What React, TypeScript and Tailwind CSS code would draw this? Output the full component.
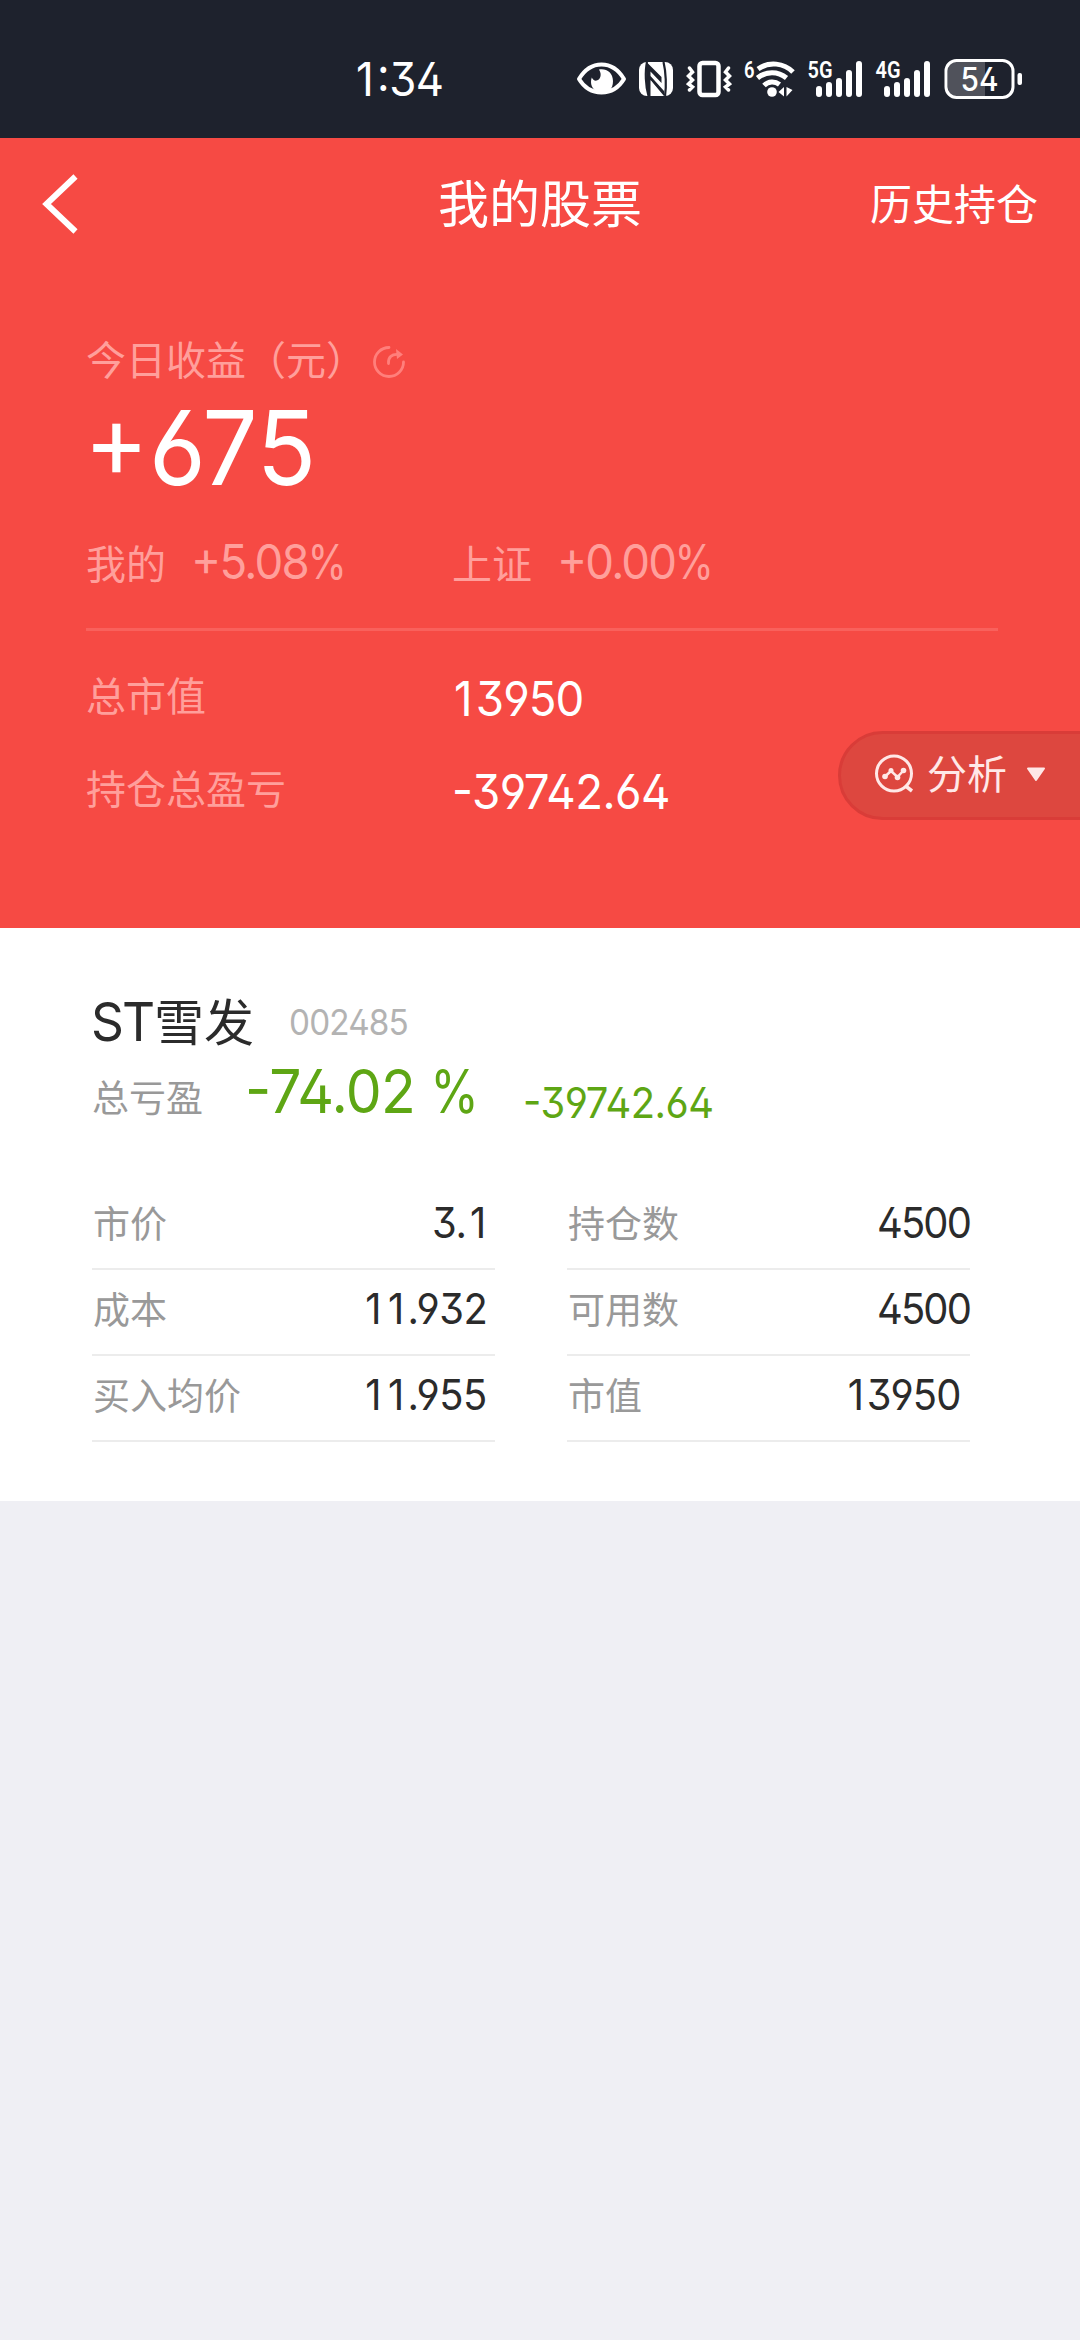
import clsx from "clsx";
import { twMerge } from "tailwind-merge";

const CN = "font-['Noto_Sans_CJK_SC',sans-serif]";
const NUM =
  "block whitespace-pre font-['Inter','Noto_Sans_CJK_SC',sans-serif] [font-feature-settings:'ss01','case'] tracking-[-0.012em] scale-x-[0.95]";

type NumProps = { children: string; className?: string; right?: boolean };

// Narrow figures, anchored to the side they are aligned on.
// "1" gets extra room so that columns of digits stay even.
function Num({ children, className, right }: NumProps) {
  return (
    <span className={twMerge(NUM, right ? "origin-right" : "origin-left", className)}>
      {children.split(/([1%])/).map((part, i) => {
        if (part === "1") {
          return (
            <i key={i} className="px-[0.09em] not-italic">
              1
            </i>
          );
        }
        if (part === "%") {
          return (
            <i key={i} className="inline-block origin-left scale-x-[0.87] not-italic">
              %
            </i>
          );
        }
        return part;
      })}
    </span>
  );
}

function Signal({ label }: { label: string }) {
  return (
    <svg width="56" height="40" viewBox="0 0 56 40" fill="none" className="overflow-visible">
      <text
        x="0.5"
        y="19"
        fill="#fff"
        fontFamily="Roboto, sans-serif"
        fontSize="23"
        fontWeight="600"
        textLength="25"
        lengthAdjust="spacingAndGlyphs"
      >
        {label}
      </text>
      <path
        d="M12 30v5M22 26v9M32 22v13M42 14v21M52 5v30"
        stroke="#fff"
        strokeWidth="6"
        strokeLinecap="round"
      />
    </svg>
  );
}

function StatusBar() {
  return (
    <div className="flex h-[138px] items-center bg-[#1e222d] pt-5 pl-[352px]">
      <div className="w-[224px] text-[46px] leading-[46px] text-white">
        <Num>1:34</Num>
      </div>

      <svg width="51" height="40" viewBox="0 0 51 40" fill="none">
        <path
          d="M3 20C9 10 17 5.500 25.500 5.500S42 10 48 20C42 30 34 33.500 25.500 33.500S9 30 3 20Z"
          stroke="#fff"
          strokeWidth="4"
          strokeLinejoin="round"
        />
        <path
          d="M23 10.500c7-1.500 14 3 14 11.500s-5 12-11 12-11-5-11-11c0-1.500.2-3 .8-4.500 1 2.500 3 3.500 5 3 3.500-.8 5.500-6 2.200-11Z"
          fill="#fff"
        />
      </svg>

      <svg width="34" height="40" viewBox="0 0 34 40" className="ml-[12px]">
        <rect y="3" width="34" height="34" rx="8" fill="#fff" />
        <path
          d="M8 3C6 12 6.500 27 9.500 37M24.500 3C27 13 27.500 28 26 37"
          stroke="#1e222d"
          strokeWidth="2.200"
          fill="none"
        />
        <path
          d="M8 3.500L22.500 18V24L11.500 12.500V17L25 32V37L11.500 21V37H9.500C7 27 7 13 8 3.500Z"
          fill="#1e222d"
          fillRule="evenodd"
        />
        <path d="M12 22L24 37H12Z" fill="#fff" />
      </svg>

      <svg width="46" height="40" viewBox="0 0 46 40" fill="none" className="ml-[13px]">
        <rect x="13.500" y="4" width="19" height="32" rx="3" stroke="#fff" strokeWidth="4.500" />
        <path
          d="M3.500 9l3 4-4 4 4 4-4 4 4 3-3 3M42.500 9l-3 4 4 4-4 4 4 4-4 3 3 3"
          stroke="#fff"
          strokeWidth="3.500"
          strokeLinecap="round"
        />
      </svg>

      <svg
        width="54"
        height="40"
        viewBox="0 0 54 40"
        fill="none"
        className="ml-[12px] overflow-visible"
      >
        <text
          x="0"
          y="18.500"
          fill="#fff"
          fontFamily="Roboto, sans-serif"
          fontSize="24"
          fontWeight="600"
          textLength="10.5"
          lengthAdjust="spacingAndGlyphs"
        >
          6
        </text>
        <path
          d="M14 10C25 2 40 4 49 13M13.500 19C22 12 34 12 42.500 19M20 26.500C24.500 22 31 22 35.500 25.500"
          stroke="#fff"
          strokeWidth="5"
        />
        <circle cx="28" cy="33" r="4.800" fill="#fff" />
        <path d="M40 28v9.500L34.500 33ZM42.500 28v9.500L48.500 31Z" fill="#fff" />
      </svg>

      <div className="ml-[9px] flex gap-3">
        <Signal label="5G" />
        <Signal label="4G" />
      </div>

      <svg width="80" height="42" viewBox="0 0 80 42" fill="none" className="ml-[13px]">
        <path d="M12 4H41V38H12Q4 38 4 30V12Q4 4 12 4Z" fill="#50525b" />
        <rect x="2" y="2.500" width="67" height="37" rx="10.500" stroke="#fff" strokeWidth="3" />
        <rect x="73.500" y="15" width="4.500" height="12" rx="2" fill="#fff" />
        <text
          x="16.500"
          y="32.500"
          fill="#fff"
          fontFamily="Inter, sans-serif"
          fontSize="32"
          fontWeight="500"
          textLength="38"
          lengthAdjust="spacingAndGlyphs"
          className="[font-feature-settings:'ss01']"
        >
          54
        </text>
      </svg>
    </div>
  );
}

function NavBar() {
  return (
    <div className="grid h-[132px] grid-cols-3 items-center text-white">
      <svg width="40" height="64" viewBox="0 0 40 64" fill="none" className="ml-[40px]">
        <path d="M35.500 4.500L6.500 32L35.500 59.500" stroke="#fff" strokeWidth="6" />
      </svg>
      <div className="pb-[6px] text-center text-[51px] leading-none">我的股票</div>
      <div className="pr-[42px] pb-[5px] text-right text-[42px] leading-none">历史持仓</div>
    </div>
  );
}

function AnalysisButton() {
  return (
    <button className="absolute top-[593px] right-[-4px] flex h-[89px] w-[246px] items-center rounded-l-full border-[3px] border-[#d93c38] bg-[#dd473f] pl-[33px] text-[#ffe8e7]">
      <svg
        width="40"
        height="40"
        viewBox="0 0 40 40"
        fill="none"
        stroke="currentColor"
        className="-mt-[3px]"
      >
        <circle cx="20" cy="19.500" r="17.500" strokeWidth="3" />
        <path d="M31 31.500L38 37" strokeWidth="3.500" />
        <path d="M11 22.500L17 17L23.500 23L29.500 16.500" strokeWidth="2.500" />
        <g fill="currentColor" stroke="none">
          <circle cx="11" cy="22.500" r="2.800" />
          <circle cx="17" cy="16.500" r="2.500" />
          <circle cx="23.500" cy="23.500" r="2.800" />
          <circle cx="29.500" cy="16.500" r="2.800" />
        </g>
      </svg>
      <span className="ml-[13px] pb-[7px] text-[40px] leading-none">分析</span>
      <svg width="20" height="15" viewBox="0 0 20 15" className="-mt-[3px] ml-[19px]">
        <path
          d="M2 1.500H18L10 13Z"
          fill="currentColor"
          stroke="currentColor"
          strokeWidth="2"
          strokeLinejoin="round"
        />
      </svg>
    </button>
  );
}

function Summary() {
  return (
    <div className="px-[86px] pt-[66px] text-[40px] leading-[48px] text-[#ff9f9b]">
      <div className="flex h-[48px] items-center">
        <span className="-mt-1 w-[286px] shrink-0 whitespace-nowrap">今日收益（元）</span>
        <svg width="34" height="34" viewBox="0 0 34 34" fill="none" className="mt-1 text-[#ff7f7b]">
          <path
            d="M17 2.500A14.500 14.500 0 1 0 31.500 17M16.500 18.500C16 12 20 9 26 9.500"
            stroke="currentColor"
            strokeWidth="2.800"
            strokeLinecap="round"
          />
          <path d="M24 4L31 9.500L25 14Z" fill="currentColor" />
        </svg>
      </div>

      <div className="mt-[15px] -ml-[2px] h-[98px] text-[103px] leading-[98px] text-white">
        <Num className="tracking-[0.002em]">+675</Num>
      </div>

      <div className="mt-[41px] flex h-[48px] items-center">
        <span className="w-[105px]">我的</span>
        <Num className="w-[261px] text-[48px] tracking-[-0.038em]">+5.08%</Num>
        <span className="w-[105px]">上证</span>
        <Num className="text-[48px] tracking-[-0.04em]">+0.00%</Num>
      </div>

      <div className="mt-[42px] h-[3px] w-[912px] bg-[#f9615c]" />

      <div className="mt-[43px] flex h-[48px] items-center">
        <span className="-mt-[8px] w-[364px]">总市值</span>
        <Num className="mt-[2px] text-[48px] tracking-[-0.02em] text-white">13950</Num>
      </div>
      <div className="mt-[45px] flex h-[48px] items-center">
        <span className="-mt-[8px] w-[366px]">持仓总盈亏</span>
        <Num className="mt-[2px] text-[48px] text-white">-39742.64</Num>
      </div>
    </div>
  );
}

type RowProps = { label: string; value: string; className?: string };

function Row({ label, value, className }: RowProps) {
  return (
    <div className="flex h-[86px] items-center justify-between border-b-2 border-[#ececec] pl-px">
      <span className="pb-[7px] text-[37px] text-[#999]">{label}</span>
      <Num right className={clsx("pb-[7px] text-[42px] text-[#2b2b2b]", className)}>
        {value}
      </Num>
    </div>
  );
}

const LEFT_ROWS = [
  { label: "市价", value: "3.1", className: "mr-[6px]" },
  { label: "成本", value: "11.932", className: "mr-[8px]" },
  { label: "买入均价", value: "11.955", className: "mr-[8px]" },
];

const RIGHT_ROWS = [
  { label: "持仓数", value: "4500", className: "tracking-[-0.045em]" },
  { label: "可用数", value: "4500", className: "tracking-[-0.045em]" },
  { label: "市值", value: "13950", className: "mr-[9px] tracking-[-0.022em]" },
];

function Holding() {
  return (
    <div className="h-[573px] bg-white pt-[66px] pr-[110px] pl-[92px]">
      <div className="flex h-[56px] items-center">
        <div className="flex w-[197px] items-center leading-none text-[#2b2b2b]">
          <Num className="-ml-px w-[63px] text-[54px] tracking-[-0.035em]">ST</Num>
          <span className="-mt-[6px] text-[50px] whitespace-nowrap">雪发</span>
        </div>
        <Num className="text-[35px] leading-none tracking-[-0.025em] text-[#b3b3b3]">002485</Num>
      </div>
      <div className="mt-[14px] flex h-[56px] items-center leading-none">
        <span className="mt-[8px] w-[153px] text-[37px] text-[#999]">总亏盈</span>
        <Num className="-mt-[2px] w-[278px] text-[60px] text-[#5ea614]">-74.02 %</Num>
        <Num className="mt-[21px] text-[42px] text-[#5ea614]">-39742.64</Num>
      </div>

      <div className="mt-[64px] grid grid-cols-[403px_403px] gap-[72px]">
        <div>
          {LEFT_ROWS.map((row) => (
            <Row key={row.label} {...row} />
          ))}
        </div>
        <div>
          {RIGHT_ROWS.map((row) => (
            <Row key={row.label} {...row} />
          ))}
        </div>
      </div>
    </div>
  );
}

export default function App() {
  return (
    <div className={clsx("h-[2340px] w-[1080px] overflow-hidden bg-[#efeff4]", CN)}>
      <StatusBar />
      <div className="relative h-[790px] bg-[#f64a44]">
        <NavBar />
        <Summary />
        <AnalysisButton />
      </div>
      <Holding />
    </div>
  );
}
